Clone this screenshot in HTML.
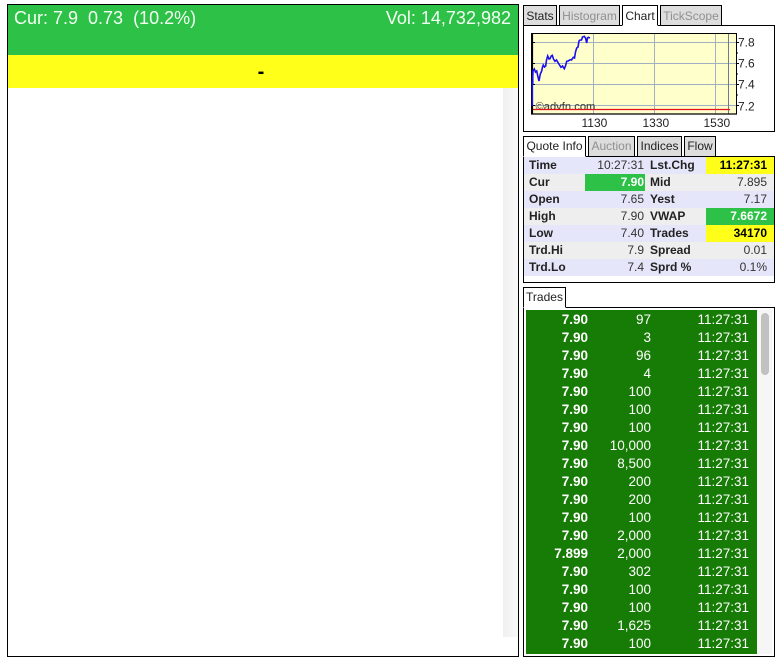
<!DOCTYPE html>
<html><head><meta charset="utf-8">
<style>
html,body{margin:0;padding:0;background:#fff}
body{width:782px;height:660px;position:relative;overflow:hidden;font-family:"Liberation Sans",sans-serif;font-size:12px;color:#000}
.a{position:absolute;box-sizing:border-box}
.tab{position:absolute;box-sizing:border-box;height:21px;border:1px solid #000;background:#ddd;color:#222;font-size:12px;line-height:18px;text-align:center;white-space:nowrap}
.tab.top{line-height:20px}
.tab.off{color:#909090}
.tab.on{background:#fff;border-bottom:1px solid #fff;z-index:2}
.r{position:absolute;left:524px;width:250px;height:17px;line-height:17px;font-size:12px;color:#222}
.r span{position:absolute;top:0;height:17px;white-space:nowrap}
.l1{left:0;width:61px;padding-left:5px;font-weight:bold;box-sizing:border-box}
.v1{left:61px;width:60px;text-align:right;padding-right:1px;box-sizing:border-box;color:#333}
.l2{left:121px;width:61px;padding-left:5px;font-weight:bold;box-sizing:border-box}
.v2{left:182px;width:68px;text-align:right;padding-right:7px;box-sizing:border-box;color:#333}
.bl{background:#e6e6fa}.gr{background:#eee}
.r .g{background:#2dc147;color:#fff;font-weight:bold}
.r .y{background:#ffff1a;color:#000;font-weight:bold}
.t{position:absolute;left:526px;width:231px;height:18px;line-height:18px;font-size:13.5px;color:#fff;white-space:nowrap}
.t b,.t i,.t u{position:absolute;top:1px;font-style:normal;text-decoration:none;text-align:right}
.t b{left:0;width:62px}.t i{left:62px;width:63px}.t u{left:125px;width:98px}
</style></head><body>

<div class="a" style="left:7px;top:4px;width:512px;height:653px;border:1px solid #000"></div>
<div class="a" style="left:8px;top:5px;width:510px;height:50px;background:#2dc147"></div>
<div class="a" style="left:14px;top:8px;font-size:18px;line-height:21px;color:#f4fff4;white-space:pre">Cur: 7.9  0.73  (10.2%)</div>
<div class="a" style="right:271px;top:8px;font-size:18px;line-height:21px;color:#f4fff4;white-space:pre">Vol: 14,732,982</div>
<div class="a" style="left:8px;top:55px;width:510px;height:33px;background:#ffff1a"></div>
<div class="a" style="left:8px;top:62px;width:506px;text-align:center;font-size:20px;font-weight:bold;line-height:20px">-</div>
<div class="a" style="left:503px;top:88px;width:15px;height:549px;background:linear-gradient(90deg,#f0f0f0,#f9f9f9)"></div>

<div class="tab top" style="left:523px;top:5px;width:34px">Stats</div>
<div class="tab top off" style="left:559px;top:5px;width:61px">Histogram</div>
<div class="tab top on" style="left:622px;top:5px;width:36px">Chart</div>
<div class="tab top off" style="left:660px;top:5px;width:62px">TickScope</div>
<div class="a" style="left:523px;top:25px;width:252px;height:107px;border:1px solid #000"></div>

<svg class="a" style="left:525px;top:28px" width="249" height="102" viewBox="525 28 249 102">
<rect x="532" y="33.500" width="204" height="80" fill="#ffffcc"/>
<g stroke="#a3afc2" stroke-width="1">
<path d="M532 42.500H736M532 63.500H736M532 84.500H736M532 105.500H736"/>
<path d="M593.500 34V114M654.500 34V114M715.500 34V114"/>
<path d="M728.500 34V114" stroke="#6f7a8c"/>
</g>
<g font-family="Liberation Sans,sans-serif" fill="#222">
<text x="535.500" y="110" font-size="11.200" fill="#333">©advfn.com</text>
</g>
<path d="M532 109.500H730" stroke="#e8101c" stroke-width="1.200"/>
<rect x="531.500" y="33.500" width="205" height="80.500" fill="none" stroke="#000" stroke-width="1"/>
<path d="M532.500 33V114.500M531 114H737" stroke="#000" stroke-width="1.200"/>
<path d="M532 42.500h3M532 63.500h3M532 84.500h3M532 105.500h3M736 42.500h3M736 63.500h3M736 84.500h3M736 105.500h3M736 53h2M736 74h2M736 95h2" stroke="#000"/>
<path d="M532.300 106V84M532.800 84V70" fill="none" stroke="#1a10f0" stroke-width="1.500"/>
<path d="M532.300 84L533 71L534.300 69L535.500 72L536.700 71L538 77L539 81L540.300 74L541.700 71L542.500 67L543.300 65L544.500 67L545.700 66L546.500 60L547.700 56L549 59L550 58.700L551.200 56L552.300 55.300L553.500 59L555 61.300L556.500 60L558.300 63L559.500 65L561 67.300L562.500 66L564.300 68.700L565.500 66L566.700 61.300L568.300 61L570 59.700L571.500 60L573.300 57.300L574.500 58L575.500 52L576.700 48L578 47L579 41L580 40L581.500 40L582.500 37L584.300 36.300L585.500 38L586.700 43L587.500 38L588.300 37.300L590 38" fill="none" stroke="#1a10f0" stroke-width="1.600"/>
<g font-family="Liberation Sans,sans-serif" font-size="12" fill="#222">
<text x="738" y="46.500">7.8</text><text x="738" y="67.500">7.6</text><text x="738" y="88.500">7.4</text><text x="738" y="110.500">7.2</text>
<text x="581.500" y="127">1130</text><text x="642.500" y="127">1330</text><text x="703.500" y="127">1530</text>
</g>
</svg>

<div class="tab on" style="left:523px;top:136px;width:63px">Quote Info</div>
<div class="tab off" style="left:588px;top:136px;width:47px">Auction</div>
<div class="tab" style="left:637px;top:136px;width:45px">Indices</div>
<div class="tab" style="left:684px;top:136px;width:32px">Flow</div>
<div class="a" style="left:523px;top:156px;width:252px;height:127px;border:1px solid #000"></div>

<div class="r" style="top:157px"><span class="l1 bl">Time</span><span class="v1 bl">10:27:31</span><span class="l2 bl">Lst.Chg</span><span class="v2 y">11:27:31</span></div>
<div class="r" style="top:174px"><span class="l1 gr">Cur</span><span class="v1 g">7.90</span><span class="l2 gr">Mid</span><span class="v2 gr">7.895</span></div>
<div class="r" style="top:191px"><span class="l1 bl">Open</span><span class="v1 bl">7.65</span><span class="l2 bl">Yest</span><span class="v2 bl">7.17</span></div>
<div class="r" style="top:208px"><span class="l1 gr">High</span><span class="v1 gr">7.90</span><span class="l2 gr">VWAP</span><span class="v2 g">7.6672</span></div>
<div class="r" style="top:225px"><span class="l1 bl">Low</span><span class="v1 bl">7.40</span><span class="l2 bl">Trades</span><span class="v2 y">34170</span></div>
<div class="r" style="top:242px"><span class="l1 gr">Trd.Hi</span><span class="v1 gr">7.9</span><span class="l2 gr">Spread</span><span class="v2 gr">0.01</span></div>
<div class="r" style="top:259px"><span class="l1 bl">Trd.Lo</span><span class="v1 bl">7.4</span><span class="l2 bl">Sprd %</span><span class="v2 bl">0.1%</span></div>

<div class="tab on" style="left:523px;top:287px;width:43px">Trades</div>
<div class="a" style="left:523px;top:307px;width:252px;height:350px;border:1px solid #000"></div>
<div class="a" style="left:526px;top:310px;width:231px;height:344px;background:#177c05"></div>
<div class="a" style="left:757px;top:310px;width:15px;height:344px;background:#f6f6f6"></div>
<div class="a" style="left:761px;top:313px;width:8px;height:62px;background:#c1c1c1;border-radius:4px"></div>

<div class="t" style="top:310px"><b>7.90</b><i>97</i><u>11:27:31</u></div>
<div class="t" style="top:328px"><b>7.90</b><i>3</i><u>11:27:31</u></div>
<div class="t" style="top:346px"><b>7.90</b><i>96</i><u>11:27:31</u></div>
<div class="t" style="top:364px"><b>7.90</b><i>4</i><u>11:27:31</u></div>
<div class="t" style="top:382px"><b>7.90</b><i>100</i><u>11:27:31</u></div>
<div class="t" style="top:400px"><b>7.90</b><i>100</i><u>11:27:31</u></div>
<div class="t" style="top:418px"><b>7.90</b><i>100</i><u>11:27:31</u></div>
<div class="t" style="top:436px"><b>7.90</b><i>10,000</i><u>11:27:31</u></div>
<div class="t" style="top:454px"><b>7.90</b><i>8,500</i><u>11:27:31</u></div>
<div class="t" style="top:472px"><b>7.90</b><i>200</i><u>11:27:31</u></div>
<div class="t" style="top:490px"><b>7.90</b><i>200</i><u>11:27:31</u></div>
<div class="t" style="top:508px"><b>7.90</b><i>100</i><u>11:27:31</u></div>
<div class="t" style="top:526px"><b>7.90</b><i>2,000</i><u>11:27:31</u></div>
<div class="t" style="top:544px"><b>7.899</b><i>2,000</i><u>11:27:31</u></div>
<div class="t" style="top:562px"><b>7.90</b><i>302</i><u>11:27:31</u></div>
<div class="t" style="top:580px"><b>7.90</b><i>100</i><u>11:27:31</u></div>
<div class="t" style="top:598px"><b>7.90</b><i>100</i><u>11:27:31</u></div>
<div class="t" style="top:616px"><b>7.90</b><i>1,625</i><u>11:27:31</u></div>
<div class="t" style="top:634px"><b>7.90</b><i>100</i><u>11:27:31</u></div>

</body></html>
